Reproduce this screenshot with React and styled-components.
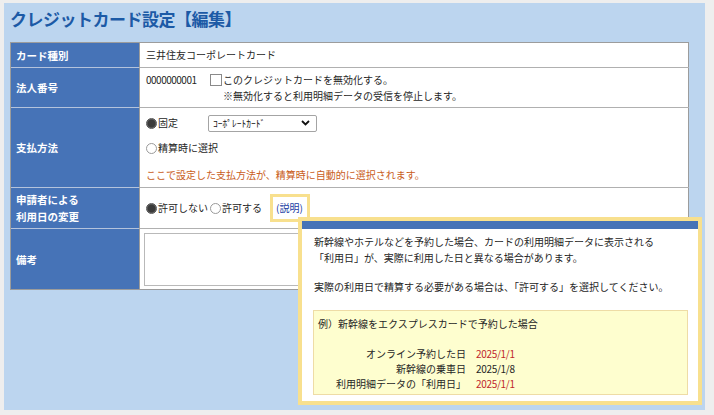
import React from 'react';
import styled, { createGlobalStyle } from 'styled-components';

const Global = createGlobalStyle`
  html, body { margin: 0; padding: 0; background: #eeeeee; }
  body {
    font-family: "Noto Sans CJK JP", "Noto Sans", sans-serif;
    font-size: 10px;
    color: #262626;
  }
  * { box-sizing: border-box; }
`;

const Page = styled.div`
  padding: 3px 9px 5px 4px;
`;

const Panel = styled.div`
  background: #bcd5ef;
  height: 407px;
  padding: 4px 16px 0 6px;
`;

const Title = styled.h1`
  margin: 0 0 11px;
  font-size: 17px;
  line-height: 24px;
  font-weight: 700;
  letter-spacing: -0.5px;
  color: #1c5aa6;
`;

const Form = styled.div`
  display: grid;
  grid-template-columns: 128px 1fr;
  grid-template-rows: 24px 40px 80px 41px 61px;
  border: 1px solid #9c9c9c;
  background: #fff;
`;

const Label = styled.div`
  background: #4673b7;
  color: #fff;
  font-weight: 700;
  font-size: 10.5px;
  line-height: 17px;
  padding-left: 5px;
  display: flex;
  flex-direction: column;
  justify-content: center;
  border-top: ${p => (p.$first ? 'none' : '1px solid #b4c3dc')};
`;

const Cell = styled.div`
  border-left: 1px solid #9c9c9c;
  border-top: ${p => (p.$first ? 'none' : '1px solid #b0b0b0')};
  padding: ${p => p.$pad || '0 6px'};
  display: flex;
  flex-direction: column;
  justify-content: ${p => p.$align || 'center'};
  line-height: 16px;
  position: relative;
`;

const Line = styled.div`
  display: flex;
  align-items: center;
  height: ${p => p.$h || 16}px;
  margin-top: ${p => p.$mt || 0}px;
  padding-left: ${p => p.$indent || 0}px;
`;

const Number = styled.span`
  width: 64px;
  letter-spacing: -0.5px;
`;

const Checkbox = styled.span`
  display: inline-block;
  width: 12px;
  height: 12px;
  border: 1px solid #8a8a8a;
  background: #fff;
  margin-right: 1px;
`;

const Radio = styled.span`
  display: inline-block;
  width: 11px;
  height: 11px;
  border-radius: 50%;
  border: 1px solid ${p => (p.$on ? '#555' : '#9a9a9a')};
  background: ${p => (p.$on ? 'radial-gradient(circle, #3a3a3a 0 55%, #666 70%)' : '#fff')};
  margin-right: 1px;
  flex: none;
`;

const Choice = styled.span`
  display: inline-flex;
  align-items: center;
  width: ${p => (p.$w ? `${p.$w}px` : 'auto')};
  margin-right: ${p => p.$mr || 0}px;
`;

const Select = styled.div`
  width: 109px;
  height: 17px;
  border: 1px solid #a4a4a4;
  border-radius: 2px;
  background: #fff;
  display: flex;
  align-items: center;
  justify-content: space-between;
  padding: 0 6px 0 4px;
  font-size: 9.5px;
  color: #111;
`;

const Note = styled.span`
  color: #c95d22;
`;

const HelpWrap = styled.span`
  position: relative;
  display: inline-block;
  border: 3px solid #f8e08e;
  padding: 4px 4px 4px 3px;
  line-height: 14px;
  background: #fff;
  margin-left: 1px;
`;

const HelpLink = styled.span`
  color: #2140a3;
`;

const Textarea = styled.textarea`
  display: block;
  width: 541px;
  height: 53px;
  border: 1px solid #b9b9b9;
  resize: none;
  outline: none;
  margin: 0;
  padding: 2px;
  font: inherit;
`;

const Tooltip = styled.div`
  position: absolute;
  left: 25px;
  top: 20px;
  width: 404px;
  height: 188px;
  border: 4px solid #f8e08e;
  background: #fff;
  z-index: 10;
  color: #262626;
  line-height: 16px;
  white-space: nowrap;
`;

const TipBar = styled.div`
  height: 8px;
  background: #4673b7;
`;

const TipBody = styled.div`
  padding: 5px 10px 6px 11px;
`;

const TipPara = styled.p`
  margin: ${p => p.$mt || 0}px 0 0;
  padding-left: 1px;
`;

const Example = styled.div`
  margin-top: 15px;
  height: 85px;
  background: #fefecf;
  border: 1px solid #eedca6;
  padding: 5px 4px 0;
`;

const ExampleRows = styled.div`
  display: grid;
  grid-template-columns: 148px auto;
  column-gap: 10px;
  margin-top: 14px;
  line-height: 15px;
`;

const ExLabel = styled.span`
  text-align: right;
`;

const ExDate = styled.span`
  color: ${p => (p.$red ? '#c0262c' : '#262626')};
  letter-spacing: -0.3px;
`;

const Chevron = () => (
  <svg width="9" height="6" viewBox="0 0 9 6">
    <polyline points="1,1 4.5,4.5 8,1" fill="none" stroke="#111" strokeWidth="1.8" />
  </svg>
);

export default function App() {
  return (
    <Page>
      <Global />
      <Panel>
        <Title>クレジットカード設定【編集】</Title>
        <Form>
          <Label $first>カード種別</Label>
          <Cell $first>三井住友コーポレートカード</Cell>

          <Label>法人番号</Label>
          <Cell>
            <Line>
              <Number>0000000001</Number>
              <Checkbox />
              このクレジットカードを無効化する。
            </Line>
            <Line $indent={77}>※無効化すると利用明細データの受信を停止します。</Line>
          </Cell>

          <Label>支払方法</Label>
          <Cell $align="flex-start" $pad="6px 6px 0">
            <Line $h={18}>
              <Choice $w={62}>
                <Radio $on />
                固定
              </Choice>
              <Select>
                ｺｰﾎﾟﾚｰﾄｶｰﾄﾞ
                <Chevron />
              </Select>
            </Line>
            <Line $h={20} $mt={6}>
              <Choice>
                <Radio />
                精算時に選択
              </Choice>
            </Line>
            <Line $mt={9}>
              <Note>ここで設定した支払方法が、精算時に自動的に選択されます。</Note>
            </Line>
          </Cell>

          <Label>
            <span>申請者による</span>
            <span>利用日の変更</span>
          </Label>
          <Cell>
            <Line>
              <Choice $mr={2}>
                <Radio $on />
                許可しない
              </Choice>
              <Choice $mr={7}>
                <Radio />
                許可する
              </Choice>
              <HelpWrap>
                <HelpLink>(説明)</HelpLink>
                <Tooltip>
                  <TipBar />
                  <TipBody>
                    <TipPara>
                      新幹線やホテルなどを予約した場合、カードの利用明細データに表示される
                      <br />
                      「利用日」が、実際に利用した日と異なる場合があります。
                    </TipPara>
                    <TipPara $mt={13}>
                      実際の利用日で精算する必要がある場合は、「許可する」を選択してください。
                    </TipPara>
                    <Example>
                      例）新幹線をエクスプレスカードで予約した場合
                      <ExampleRows>
                        <ExLabel>オンライン予約した日</ExLabel>
                        <ExDate $red>2025/1/1</ExDate>
                        <ExLabel>新幹線の乗車日</ExLabel>
                        <ExDate>2025/1/8</ExDate>
                        <ExLabel>利用明細データの「利用日」</ExLabel>
                        <ExDate $red>2025/1/1</ExDate>
                      </ExampleRows>
                    </Example>
                  </TipBody>
                </Tooltip>
              </HelpWrap>
            </Line>
          </Cell>

          <Label>備考</Label>
          <Cell $align="flex-start" $pad="4px 4px 0">
            <Textarea readOnly />
          </Cell>
        </Form>
      </Panel>
    </Page>
  );
}
